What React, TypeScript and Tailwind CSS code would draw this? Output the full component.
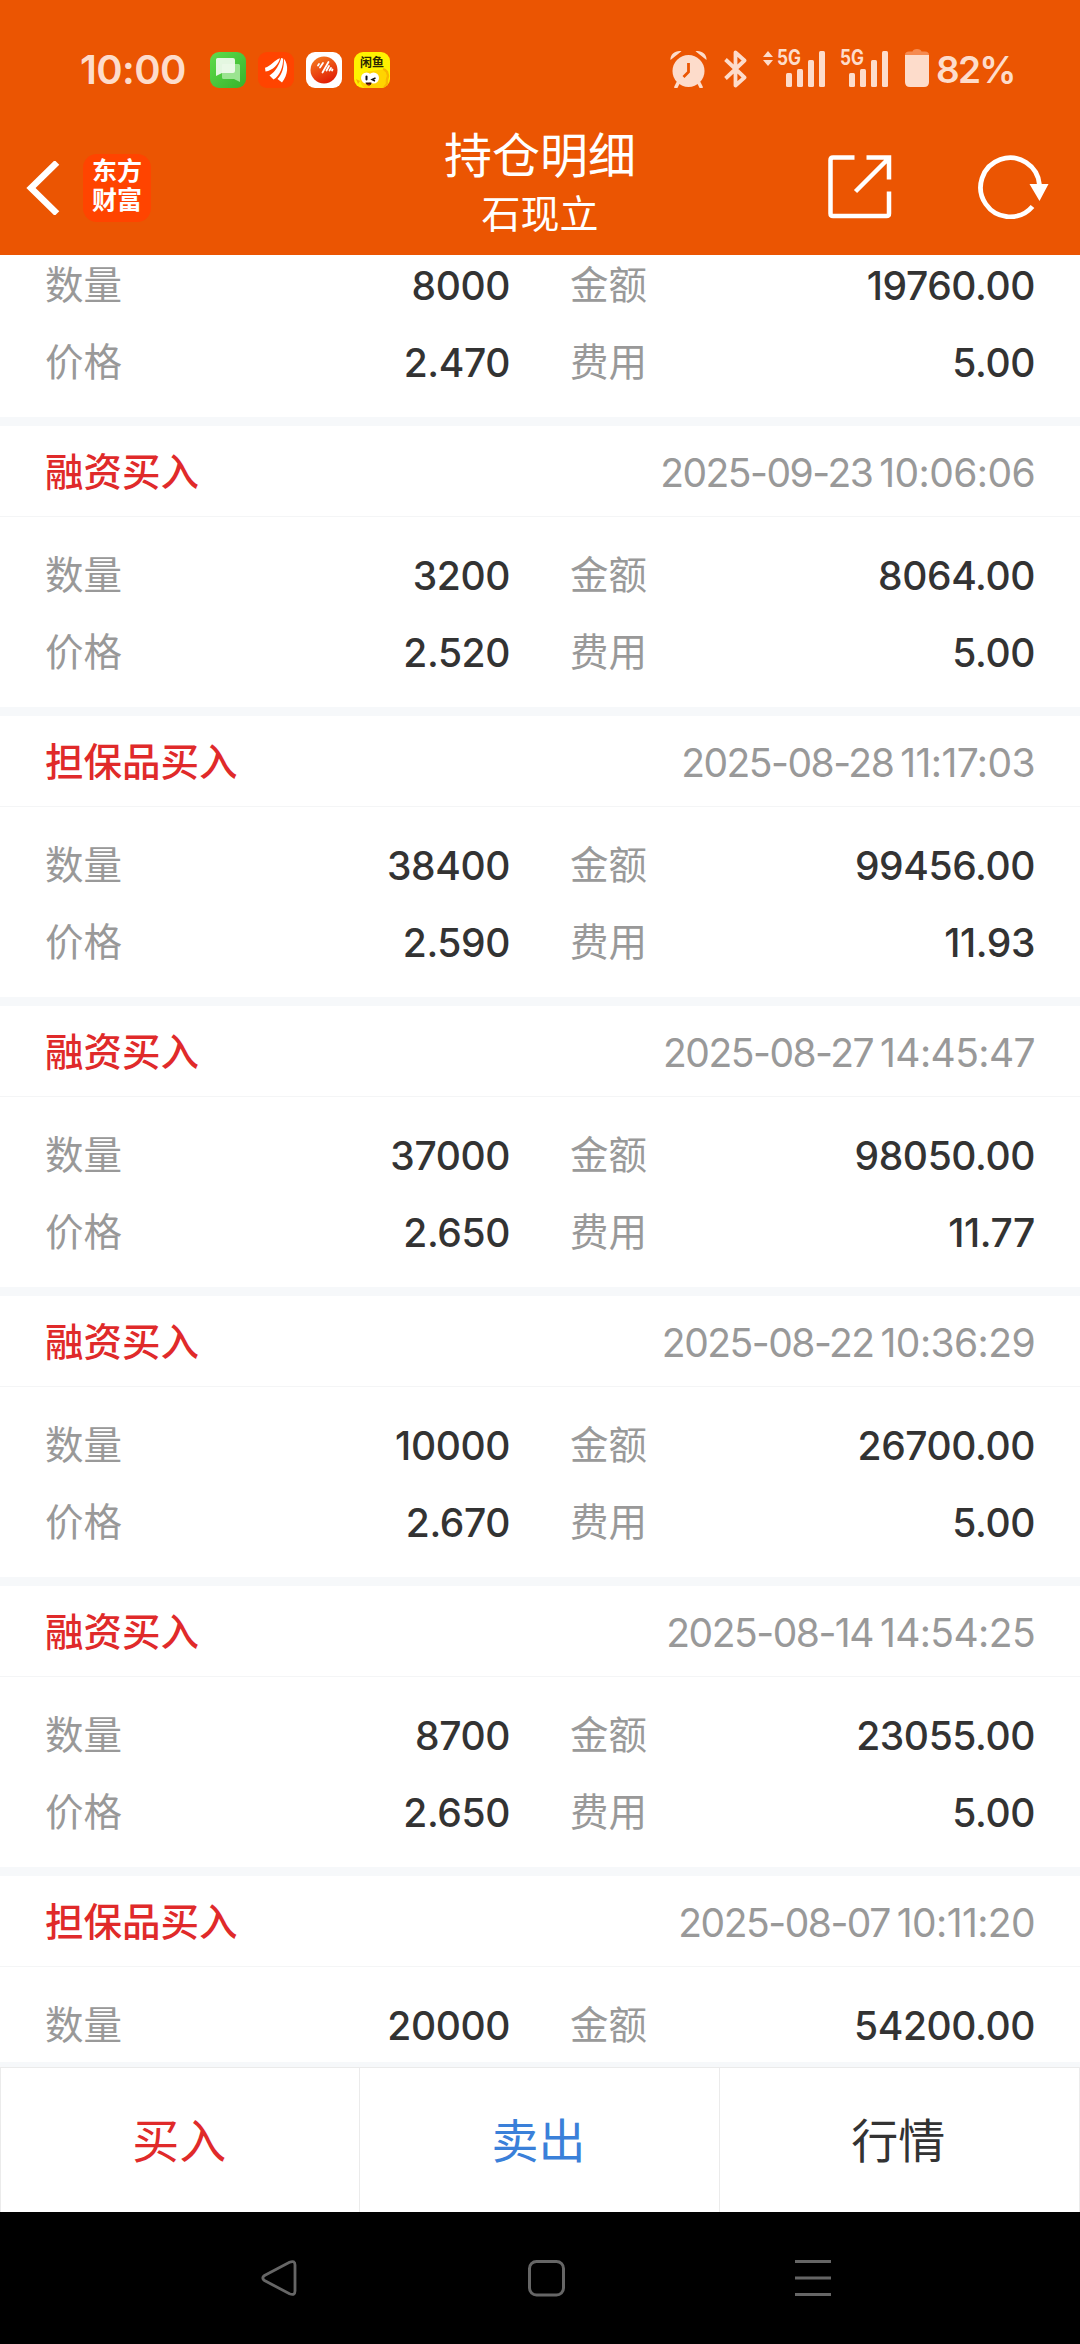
import React from "react";

interface Trade {
  id: number;
  type: string;
  date: string;
  time: string;
  quantity: string;
  amount: string;
  price?: string;
  fee?: string;
}

const trades: Trade[] = [
  { id: 1, type: "融资买入", date: "2025-09-23", time: "10:06:06", quantity: "3200", amount: "8064.00", price: "2.520", fee: "5.00" },
  { id: 2, type: "担保品买入", date: "2025-08-28", time: "11:17:03", quantity: "38400", amount: "99456.00", price: "2.590", fee: "11.93" },
  { id: 3, type: "融资买入", date: "2025-08-27", time: "14:45:47", quantity: "37000", amount: "98050.00", price: "2.650", fee: "11.77" },
  { id: 4, type: "融资买入", date: "2025-08-22", time: "10:36:29", quantity: "10000", amount: "26700.00", price: "2.670", fee: "5.00" },
  { id: 5, type: "融资买入", date: "2025-08-14", time: "14:54:25", quantity: "8700", amount: "23055.00", price: "2.650", fee: "5.00" },
  { id: 6, type: "担保品买入", date: "2025-08-07", time: "10:11:20", quantity: "20000", amount: "54200.00" },
];

const Signal: React.FC = () => (
  <svg width="39" height="36" viewBox="0 0 39 36" fill="currentColor">
    <rect x="0" y="22" width="6" height="14" rx="1.5" />
    <rect x="11" y="18" width="6" height="18" rx="1.5" />
    <rect x="22" y="9" width="6" height="27" rx="1.5" />
    <rect x="33" y="0" width="6" height="36" rx="1.5" />
  </svg>
);

const AppIcons: React.FC = () => (
  <div className="flex gap-3">
    {/* Messages */}
    <svg width="36" height="36" viewBox="0 0 36 36">
      <defs>
        <linearGradient id="msg" x1="0" y1="0" x2="1" y2="1">
          <stop offset="0" stopColor="#5fdc4c" />
          <stop offset="1" stopColor="#36b32b" />
        </linearGradient>
      </defs>
      <rect width="36" height="36" rx="9" fill="url(#msg)" />
      <path d="M13 12h15.500a1.500 1.500 0 0 1 1.500 1.500V30l-6-3H13.500a1.500 1.500 0 0 1-1.500-1.500V13a1 1 0 0 1 1-1z" fill="#9be491" />
      <path d="M7.500 6h15.500a2 2 0 0 1 2 2v11a2 2 0 0 1-2 2H12l-6 3V7.500A1.500 1.500 0 0 1 7.500 6z" fill="#f1fbef" fillOpacity=".92" />
    </svg>
    {/* Eastmoney */}
    <svg width="36" height="36" viewBox="0 0 36 36">
      <rect width="36" height="36" rx="9" fill="#ff4400" />
      <g fill="#fff">
        <path d="M7 15.800C13 14 16.500 8 22 6.200C20.500 12 15 18.500 7.500 19.500z" />
        <path d="M11.500 23.500C18 19.500 21.500 12 23.200 6L25 6.500C25.500 14 22 24 15.500 27.500z" />
        <path d="M19.500 27C24.500 22 26.300 14 25.800 6.500C31 13 30 23 24 30.500z" />
      </g>
    </svg>
    {/* Quotes app */}
    <svg width="36" height="36" viewBox="0 0 36 36">
      <defs>
        <linearGradient id="ball" x1="0.200" y1="0" x2="0.700" y2="1">
          <stop offset="0" stopColor="#f57a1f" />
          <stop offset="1" stopColor="#e01a05" />
        </linearGradient>
      </defs>
      <rect width="36" height="36" rx="9" fill="#fff" />
      <circle cx="18" cy="18" r="13.500" fill="url(#ball)" />
      <path
        d="M12 13.500l1-1.500M14 15.500l3-4.500M16.500 20.500l6-10.500M20.500 18.500l2.500-4.500M23.500 18.500l1.500-2.500M26 18.500l.500-1"
        stroke="#fff"
        strokeWidth="1.800"
        strokeLinecap="round"
      />
    </svg>
    {/* Xianyu */}
    <div className="relative h-9 w-9 overflow-hidden rounded-[9px] bg-[#fff200]">
      <svg className="absolute inset-0" width="36" height="36" viewBox="0 0 36 36">
        <path d="M24 18c5-1 9 1 9 8 0 4-1 7-3 10H10c-5-5-5-12 1-16z" fill="#ffd400" />
        <path d="M29 17l2 1 2 2 1 4-1 4 0 4-3 4" stroke="#f9b600" strokeWidth="2.500" fill="none" />
        <path d="M2 27l4 2-2 3z" fill="#f9b000" />
        <circle cx="12.500" cy="26" r="5.500" fill="#fff" />
        <circle cx="19.500" cy="26" r="5.500" fill="#fff" />
        <path d="M12.500 24.500v3" stroke="#111" strokeWidth="2" strokeLinecap="round" />
        <path d="M21.500 26l-3.500 1.500 3 1.500" stroke="#111" strokeWidth="1.400" fill="none" />
        <path d="M11.500 30.500h6c0 4-5 4-6 0z" fill="#3a0d05" />
        <path d="M13 32.500h3c-.5 1.500-2.500 1.500-3 0z" fill="#e43" />
      </svg>
      <div className="absolute inset-x-0 top-[4px] text-center text-[12px] leading-[13px] font-bold text-[#2b2800]">闲鱼</div>
    </div>
  </div>
);

const StatusBar: React.FC = () => (
  <div className="flex h-[105px] items-start justify-between pl-[80px] pr-[66px] pt-[49px] text-[#fddccb]">
    <div className="flex h-[42px] items-center">
      <span className="w-[130px] text-[40px] leading-none font-semibold tracking-[-0.6px]">10:00</span>
      <AppIcons />
    </div>
    <div className="flex h-[40px] items-start">
      <svg className="mt-px mr-[17px]" width="37" height="38" viewBox="0 0 37 38">
        <circle cx="18.500" cy="21" r="16" fill="currentColor" />
        <path d="M8 33l-2 4M29 33l2 4" stroke="currentColor" strokeWidth="3.500" strokeLinecap="round" />
        <path d="M0.500 10C0 4 6 0 11.500 1.200z M36.500 10C37 4 31 0 25.500 1.200z" fill="currentColor" />
        <path d="M18.500 13v9l-5 5" stroke="#eb5502" strokeWidth="2.800" fill="none" />
      </svg>
      <svg className="mt-px mr-[16px]" width="23" height="38" viewBox="0 0 23 38" fill="none" stroke="currentColor" strokeWidth="3.800" strokeLinejoin="round">
        <path d="M1.500 9.500L20.500 27.500L11.500 35.500V2.500L20.500 10.500L1.500 28.500" />
      </svg>
      <svg className="mt-[2px] mr-[4px]" width="10" height="15" viewBox="0 0 10 15" fill="currentColor">
        <path d="M5 0l5 6H0zM5 15l5-6H0z" />
      </svg>
      <div className="relative mr-[15px] h-[39px] w-[48px]">
        <span className="absolute -top-px left-0 origin-left scale-x-[.82] text-[21px] leading-[19px] font-bold">5G</span>
        <div className="absolute left-[9px] top-[2px]"><Signal /></div>
      </div>
      <div className="relative mr-[17px] h-[39px] w-[48px]">
        <span className="absolute -top-px left-0 origin-left scale-x-[.82] text-[21px] leading-[19px] font-bold">5G</span>
        <div className="absolute left-[9px] top-[2px]"><Signal /></div>
      </div>
      <svg className="mr-[7px]" width="24" height="38" viewBox="0 0 24 38">
        <path d="M0 6q0-3.500 4-3.500h3.500Q8 0 12 0t4.500 2.500H20q4 0 4 3.500z" fill="#f58a50" />
        <path d="M0 6h24v27q0 5-5 5H5q-5 0-5-5z" fill="currentColor" />
      </svg>
      <span className="w-[78px] whitespace-nowrap pt-[2px] text-[37px] leading-[38px] font-semibold tracking-[-1.8px]">82%</span>
    </div>
  </div>
);

const TitleBar: React.FC = () => (
  <div className="grid h-[150px] grid-cols-3 items-center text-white">
    <div className="flex items-center pl-[26px] pt-[15px]">
      <svg width="34" height="54" viewBox="0 0 34 54" fill="none" stroke="currentColor" strokeWidth="6.500">
        <path d="M31 1.500L5 27l26 25.500" />
      </svg>
      <div className="ml-[23px] flex h-[68px] w-[68px] flex-col items-center justify-center rounded-[14px] bg-[#ff4400] pb-[3px] text-[25px] leading-[29px] font-bold">
        <span>东方</span>
        <span>财富</span>
      </div>
    </div>
    <div className="flex flex-col items-center pt-[5px]">
      <h1 className="text-[48px] leading-[62px]">持仓明细</h1>
      <p className="text-[39px] leading-[54px]">石现立</p>
    </div>
    <div className="flex items-center justify-end pr-[30px] pt-[14px]">
      <svg className="mr-[86px]" width="64" height="64" viewBox="0 0 64 64" fill="none" stroke="currentColor" strokeWidth="4.500">
        <path d="M26.500 2.500H5q-2.500 0-2.500 2.500v53.500q0 2.500 2.500 2.500h53.500q2.500 0 2.500-2.500V36.500" />
        <path d="M38.500 2.500H61V24.500M60 4L27.500 36.500" />
      </svg>
      <svg width="72" height="64" viewBox="0 0 72 64">
        <path d="M54.500 51.500A29.500 29.500 0 1 1 61.500 30" fill="none" stroke="currentColor" strokeWidth="4.800" />
        <path d="M51.500 29h19L61.500 46z" fill="currentColor" />
      </svg>
    </div>
  </div>
);

const Field: React.FC<{ label: string; value: string }> = ({ label, value }) => (
  <div className="flex h-[77px] items-center justify-between">
    <span className="text-[38.5px] text-[#999]">{label}</span>
    <span className="font-medium tracking-[-0.4px] text-[#333]">{value}</span>
  </div>
);

const TradeBody: React.FC<Pick<Trade, "quantity" | "amount" | "price" | "fee">> = (props) => (
  <div className="grid h-[190px] grid-cols-2 content-start gap-x-[60px] px-[45px] pt-5">
    <Field label="数量" value={props.quantity} />
    <Field label="金额" value={props.amount} />
    {props.price && <Field label="价格" value={props.price} />}
    {props.fee && <Field label="费用" value={props.fee} />}
  </div>
);

const App: React.FC = () => {
  return (
    <div className="flex h-[2344px] w-[1080px] flex-col overflow-hidden bg-white font-[Inter,'Noto_Sans_CJK_SC',sans-serif]">
      <header className="h-[255px] shrink-0 bg-[#eb5502]">
        <StatusBar />
        <TitleBar />
      </header>

      {/* Trade list, scrolled part way down */}
      <main className="h-[1807px] shrink-0 overflow-hidden text-[39px] leading-none">
        <div className="-mt-7">
          <TradeBody quantity="8000" amount="19760.00" price="2.470" fee="5.00" />
          {trades.map((trade) => (
            <section key={trade.id} className="border-t-[9px] border-[#f6f8fa]">
              <div className="flex h-[91px] items-center justify-between border-b border-[#f4f5f6] px-[45px] pt-[2px]">
                <h2 className="text-[38.5px] font-medium text-[#e02a2a]">{trade.type}</h2>
                <div className="flex gap-[7px] text-[#999]">
                  <span className="tracking-[-1.5px]">{trade.date}</span>
                  <span className="tracking-[-0.6px]">{trade.time}</span>
                </div>
              </div>
              <TradeBody {...trade} />
            </section>
          ))}
        </div>
      </main>

      {/* Actions */}
      <div className="h-[150px] shrink-0 border-t-[5px] border-[#f6f8fa]">
        <div className="grid h-full grid-cols-3 divide-x divide-[#ebebeb] border-x border-t border-[#ebebeb] text-[47px]">
          <button className="pt-[3px] pr-[2px] text-[#e02a2a]">买入</button>
          <button className="pt-[3px] pr-[2px] text-[#3a80d9]">卖出</button>
          <button className="pt-[3px] pr-[2px] text-[#333]">行情</button>
        </div>
      </div>

      {/* System navigation */}
      <nav className="flex h-[132px] shrink-0 items-center bg-black pl-[260px] text-[#666]">
        <svg width="38" height="38" viewBox="0 0 38 38" fill="none" stroke="currentColor" strokeWidth="2.800">
          <path d="M4.500 16.500L29.500 3.200Q35 1 35 6v26q0 5-5.500 2.800L4.500 21.500Q1 19 4.500 16.500z" />
        </svg>
        <svg className="ml-[229px]" width="38" height="38" viewBox="0 0 38 38" fill="none" stroke="currentColor" strokeWidth="3">
          <rect x="2.500" y="2.500" width="34" height="33.500" rx="7" />
        </svg>
        <svg className="ml-[230px]" width="36" height="38" viewBox="0 0 36 38" fill="currentColor">
          <rect y="1" width="36" height="3" />
          <rect y="17.500" width="36" height="3" />
          <rect y="34" width="36" height="3" />
        </svg>
      </nav>
    </div>
  );
};

export default App;
